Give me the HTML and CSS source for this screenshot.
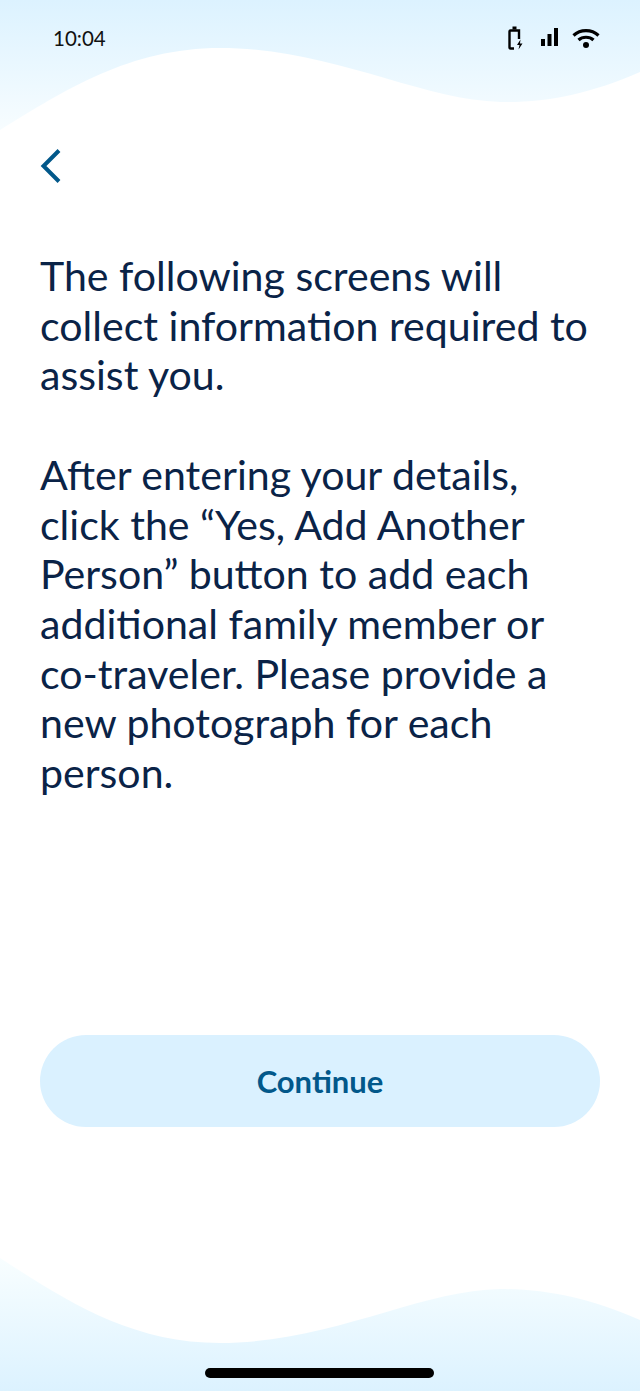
FILE: index.html
```html
<!DOCTYPE html>
<html lang="en">
<head>
    <meta charset="UTF-8">
    <meta name="viewport" content="width=device-width, initial-scale=1.0">
    <title>Before you start</title>
    <link rel="stylesheet" href="styles.css">
</head>
<body>
    <!-- background waves -->
    <svg class="wave wave-top" viewBox="0 0 640 135" preserveAspectRatio="none">
        <defs>
            <linearGradient id="top-fill" x1="0" y1="0" x2="0" y2="1">
                <stop offset="0" stop-color="#dcf2ff"/>
                <stop offset="1" stop-color="#f8fdff"/>
            </linearGradient>
            <linearGradient id="bottom-fill" x1="0" y1="0" x2="0" y2="1">
                <stop offset="0" stop-color="#f8feff"/>
                <stop offset="1" stop-color="#dcf2ff"/>
            </linearGradient>
        </defs>
        <path fill="url(#top-fill)" d="M0 0H640V72C590 94 545 103 500 102C420 100 330 48 220 48C130 48 65 90 0 130V135H0Z"/>
    </svg>
    <svg class="wave wave-bottom" viewBox="0 1255 640 136" preserveAspectRatio="none">
        <path fill="url(#bottom-fill)" d="M0 1391H640V1320C590 1298 545 1289 500 1289C420 1290 330 1343 220 1343C130 1343 65 1300 0 1258V1391Z"/>
    </svg>

    <div class="status-bar">
        <span class="time">10:04</span>
        <div class="status-icons">
            <svg class="icon-battery" width="16" height="24" viewBox="0 0 16 24">
                <rect x="4.500" y="0.500" width="4" height="3" fill="#000"/>
                <path d="M11 13V4.500H2.500A1 1 0 0 0 1.500 5.500V21.500A1 1 0 0 0 2.500 22.500H6" fill="none" stroke="#000" stroke-width="2.400"/>
                <path d="M12.500 13.500L9 19H11.500L10.500 23.500L14.500 17.500H12Z" fill="#000"/>
            </svg>
            <svg class="icon-signal" width="17" height="18" viewBox="0 0 17 18">
                <rect x="0" y="11" width="4" height="7" fill="#000"/>
                <rect x="6.500" y="6" width="4" height="12" fill="#000"/>
                <rect x="13" y="0" width="4" height="18" fill="#000"/>
            </svg>
            <svg class="icon-wifi" width="28" height="20" viewBox="0 0 28 20">
                <path d="M1.500 7.500C8.500 1 19.500 1 26.500 7.500" fill="none" stroke="#000" stroke-width="3.200"/>
                <path d="M6.500 12C10.500 8.300 17.500 8.300 21.500 12" fill="none" stroke="#000" stroke-width="3.200"/>
                <circle cx="14" cy="17" r="3" fill="#000"/>
            </svg>
        </div>
    </div>

    <main class="content">
        <a href="#" class="back-link" aria-label="Back">
            <svg width="22" height="36" viewBox="0 0 22 36">
                <path d="M19 2.500L3.500 18L19 33.500" fill="none" stroke="#02588a" stroke-width="4"/>
            </svg>
        </a>

        <div class="intro">
            <p>The following screens will collect information required to assist you.</p>
            <p>After entering your details, click the “Yes, Add Another Person” button to add each additional family member or co-traveler. Please provide a new photograph for each person.</p>
        </div>

        <button class="continue-btn">Continue</button>
    </main>

    <div class="home-bar"></div>
</body>
</html>
```

FILE: styles.css
```css
* {
    margin: 0;
    padding: 0;
    box-sizing: border-box;
}

body {
    position: relative;
    width: 640px;
    height: 1391px;
    overflow: hidden;
    background-color: #ffffff;
    font-family: 'Lato', sans-serif;
    color: #0a2347;
}

.wave {
    position: absolute;
    left: 0;
    width: 640px;
}

.wave-top {
    top: 0;
    height: 135px;
}

.wave-bottom {
    bottom: 0;
    height: 136px;
}

.status-bar {
    position: relative;
    display: flex;
    align-items: center;
    justify-content: space-between;
    height: 76px;
    padding: 0 40px 0 53px;
}

.time {
    font-size: 20.500px;
    color: #111111;
}

.status-icons {
    display: flex;
    align-items: center;
    gap: 14px;
}

.icon-battery {
    margin-right: 3px;
}

.icon-signal {
    margin-bottom: 2px;
}

.content {
    position: relative;
    padding: 0 40px;
}

.back-link {
    display: block;
    width: 22px;
    height: 36px;
    margin-top: 72px;
}

.intro {
    margin-top: 67px;
    font-size: 41.100px;
    line-height: 49.700px;
}

.intro p {
    margin-bottom: 49.700px;
}

.continue-btn {
    display: block;
    width: 560px;
    height: 92px;
    margin-top: 237px;
    border: none;
    border-radius: 46px;
    background-color: #daf1ff;
    color: #02588a;
    font-family: 'Lato', sans-serif;
    font-size: 31px;
    font-weight: bold;
}

.home-bar {
    position: absolute;
    left: 205px;
    top: 1368px;
    width: 229px;
    height: 10px;
    border-radius: 5px;
    background-color: #000000;
}
```
